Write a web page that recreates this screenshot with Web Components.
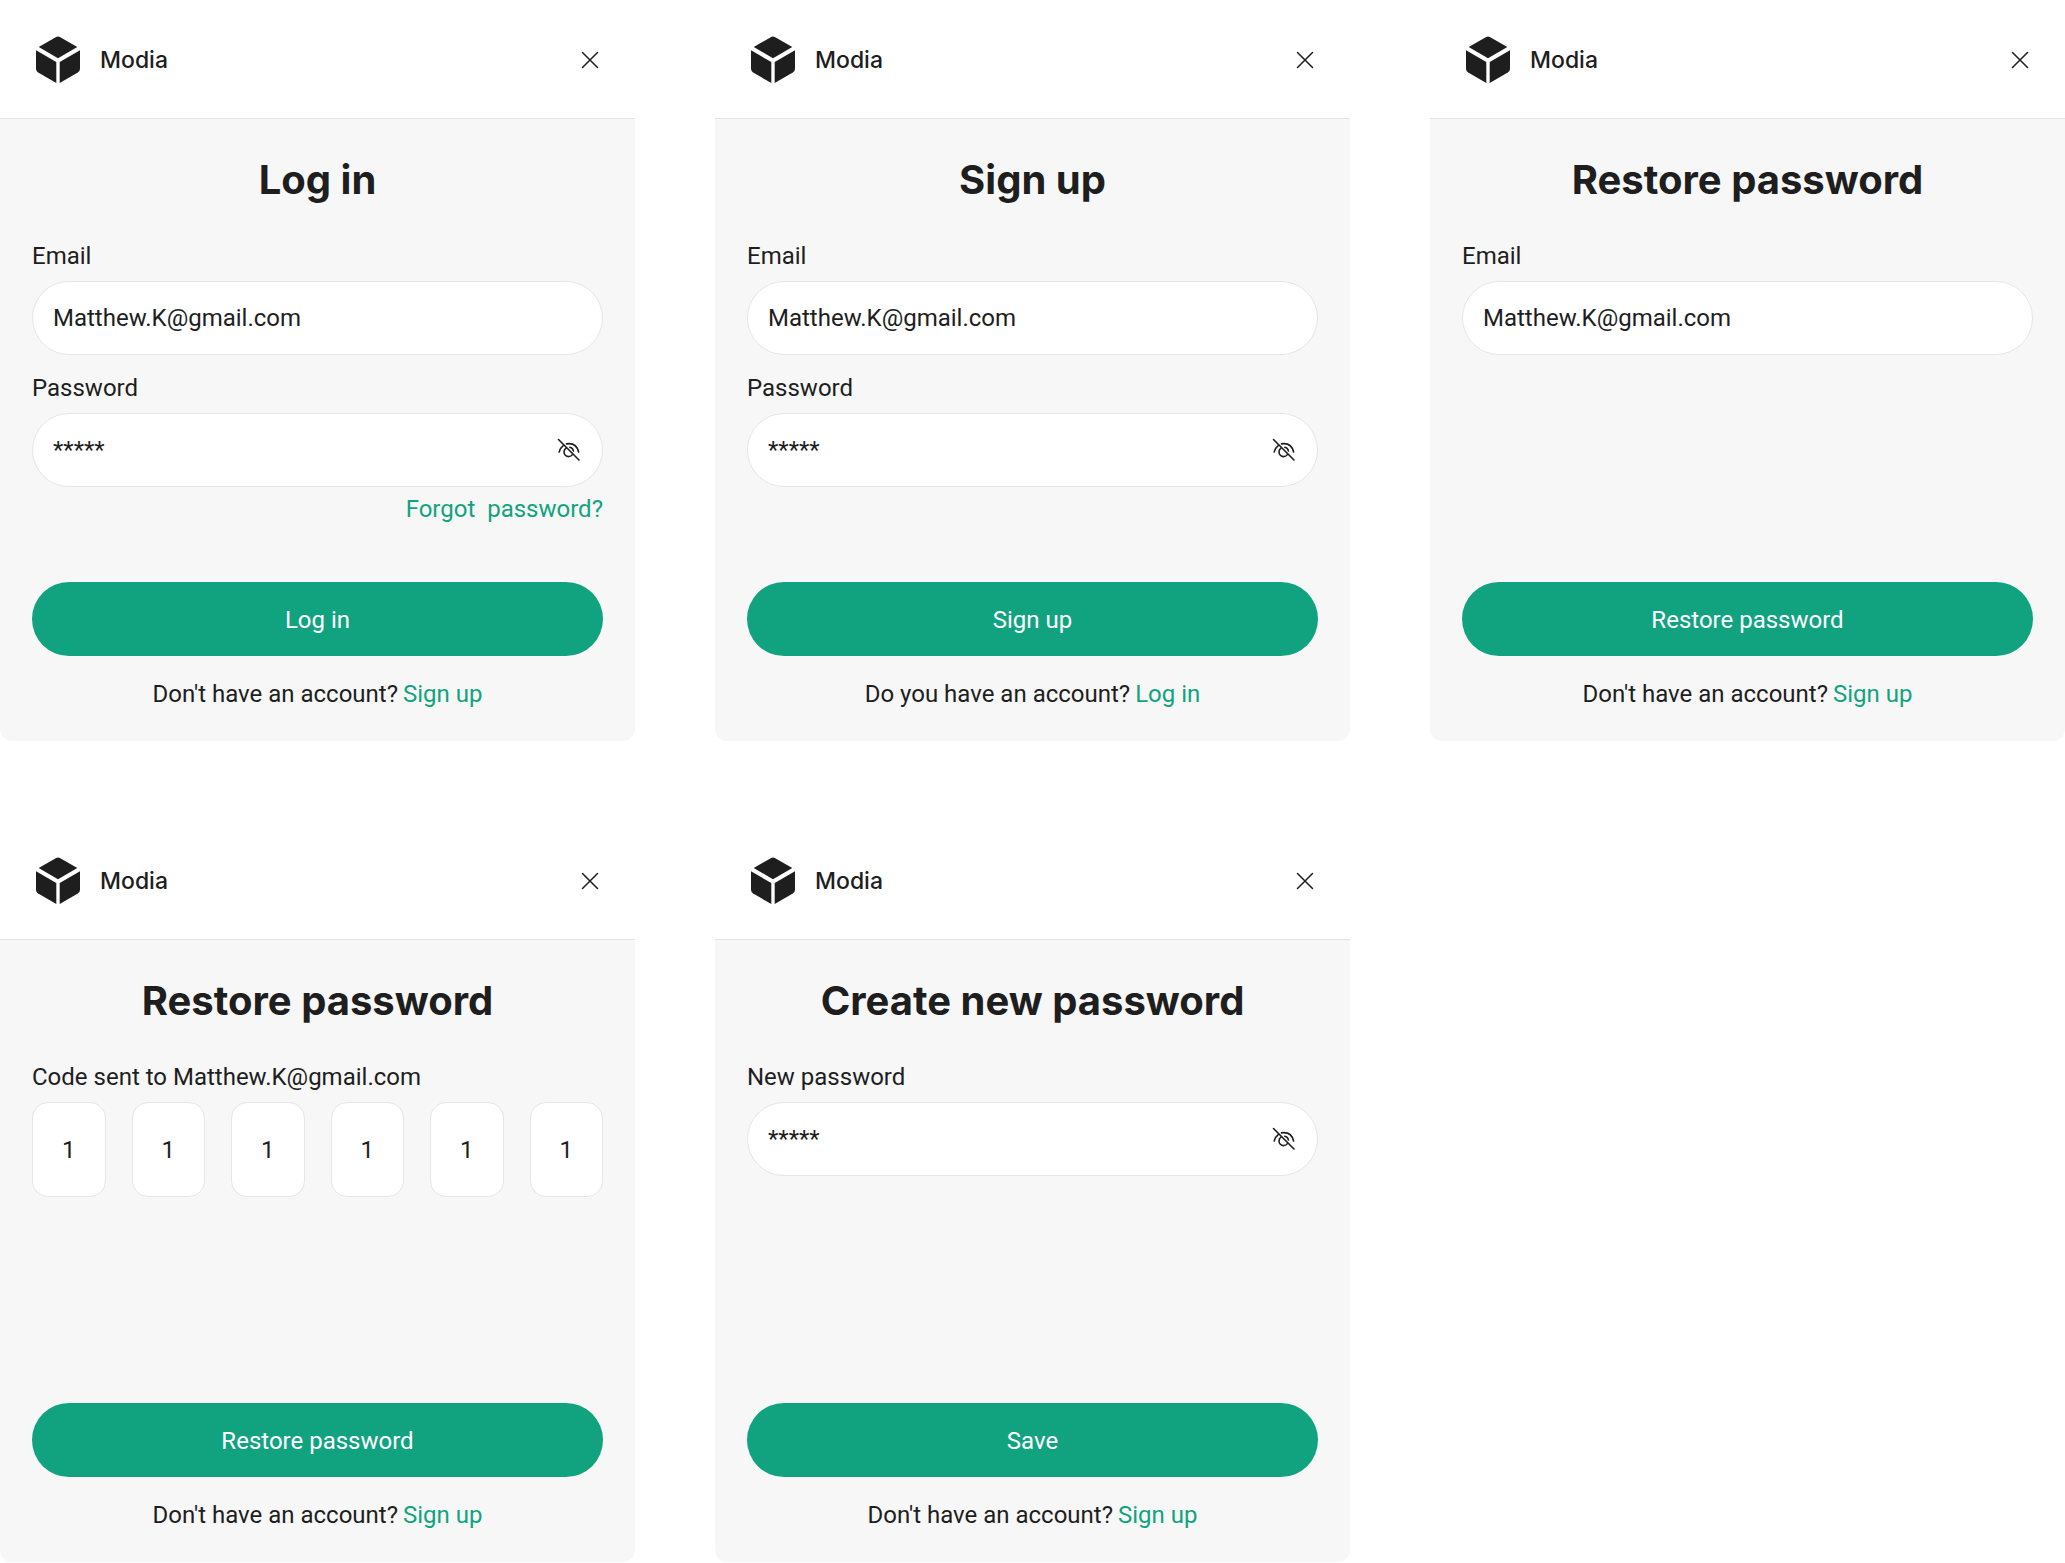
<!DOCTYPE html>
<html lang="en">
<head>
<meta charset="utf-8">
<title>Modia – account screens</title>
<style>
  body {
    margin: 0;
    background: #fff;
    color: #1e1e1e;
    font: 24px/32px Roboto, Arial, sans-serif;
  }
</style>
</head>
<body>
<auth-board>
  <auth-card heading="Log in" action="Log in" prompt="Don't have an account?" link="Sign up">
    <text-field label="Email" value="Matthew.K@gmail.com"></text-field>
    <text-field label="Password" value="*****" secret></text-field>
    <forgot-link></forgot-link>
  </auth-card>
  <auth-card heading="Sign up" action="Sign up" prompt="Do you have an account?" link="Log in">
    <text-field label="Email" value="Matthew.K@gmail.com"></text-field>
    <text-field label="Password" value="*****" secret></text-field>
  </auth-card>
  <auth-card heading="Restore password" action="Restore password" prompt="Don't have an account?" link="Sign up">
    <text-field label="Email" value="Matthew.K@gmail.com"></text-field>
  </auth-card>
  <auth-card heading="Restore password" action="Restore password" prompt="Don't have an account?" link="Sign up">
    <code-field label="Code sent to Matthew.K@gmail.com" value="111111"></code-field>
  </auth-card>
  <auth-card heading="Create new password" action="Save" prompt="Don't have an account?" link="Sign up">
    <text-field label="New password" value="*****" secret></text-field>
  </auth-card>
</auth-board>

<script>
  function render(host, markup) {
    const root = host.attachShadow({ mode: 'open' });
    root.innerHTML = '<style>*{box-sizing:border-box}</style>' + markup;
    return root;
  }

  customElements.define('auth-board', class extends HTMLElement {
    connectedCallback() {
      render(this, `
        <style>
          :host { display: block; }
          main { display: grid; grid-template-columns: repeat(3, minmax(0, 1fr)); gap: 80px; }
        </style>
        <main><slot></slot></main>`);
    }
  });

  customElements.define('modia-brand', class extends HTMLElement {
    connectedCallback() {
      render(this, `
        <style>
          :host { display: flex; align-items: center; gap: 16px; font: 500 23px/32px Inter, sans-serif; }
          svg { display: block; width: 52px; height: 52px; }
        </style>
        <svg viewBox="0 0 52 52" fill="#1e1e1e" aria-hidden="true">
          <path d="M24.2 2.9Q26 2 27.8 2.9L45.3 13L26 24.2L6.7 13Z"/>
          <path d="M4 16.3L24.3 28V49L6.2 38.6Q4 37.3 4 34.8Z"/>
          <path d="M48 16.3L27.7 28V49L45.8 38.6Q48 37.3 48 34.8Z"/>
        </svg>
        <span>Modia</span>`);
    }
  });

  customElements.define('auth-card', class extends HTMLElement {
    connectedCallback() {
      const a = n => this.getAttribute(n);
      render(this, `
        <style>
          :host { display: flex; flex-direction: column; }
          header {
            display: flex; align-items: center; justify-content: space-between;
            padding: 34px 32px 32px; border-bottom: 1px solid #e3e3e3;
          }
          .close { display: flex; padding: 4px; border: 0; background: none; color: #1e1e1e; }
          form {
            flex: 1; display: flex; flex-direction: column; min-height: 622px;
            padding: 37px 32px 31px; background: #f7f7f7; border-radius: 0 0 12px 12px;
          }
          h1 { margin: 0 0 36px; font: 700 40px/48px Inter, sans-serif; text-align: center; }
          .fields { flex: 1; display: flex; flex-direction: column; }
          .submit {
            height: 74px; padding: 2px 32px 0; border: 0; border-radius: 37px; background: #11a37f;
            color: #fff; font: inherit;
          }
          p { display: flex; justify-content: center; gap: 5px; margin: 22px 0 0; }
          a { color: #11a37f; text-decoration: none; }
        </style>
        <header>
          <modia-brand></modia-brand>
          <button class="close" type="button" aria-label="Close">
            <svg width="18" height="18" viewBox="0 0 18 18" fill="none" stroke="currentColor" stroke-width="1.5" stroke-linecap="round" aria-hidden="true"><path d="M1.5 1.5L16.5 16.5M16.5 1.5L1.5 16.5"/></svg>
          </button>
        </header>
        <form>
          <h1>${a('heading')}</h1>
          <div class="fields"><slot></slot></div>
          <button class="submit" type="button">${a('action')}</button>
          <p><span>${a('prompt')}</span><a href="#">${a('link')}</a></p>
        </form>`);
    }
  });

  customElements.define('text-field', class extends HTMLElement {
    connectedCallback() {
      const secret = this.hasAttribute('secret');
      render(this, `
        <style>
          :host { display: block; }
          :host(:not(:first-child)) { margin-top: 17px; }
          label { display: block; margin-bottom: 9px; }
          .box {
            display: flex; align-items: center; height: 74px; padding: 0 19px 0 20px;
            border: 1px solid #e6e6e6; border-radius: 37px; background: #fff;
          }
          input { flex: 1; min-width: 0; padding: 0; border: 0; outline: 0; background: none; color: inherit; font: inherit; }
          button { display: flex; padding: 0; border: 0; background: none; color: #1e1e1e; }
        </style>
        <label for="field">${this.getAttribute('label')}</label>
        <div class="box">
          <input id="field" type="text" value="${this.getAttribute('value')}" autocomplete="off" spellcheck="false">
          ${secret ? `<button type="button" aria-label="Show password">
            <svg width="28" height="28" viewBox="0 0 28 28" fill="none" stroke="currentColor" stroke-width="1.6" stroke-linecap="round" aria-hidden="true">
              <path d="M3.500 3.500L24 24"/>
              <path d="M4.200 16C5 13 6.500 10.800 8.500 9.400M11.500 7.900Q12.700 7.600 14 7.600C18.800 7.600 22.400 10.600 23.600 16"/>
              <path d="M11 12.200A4.600 4.600 0 1 0 17.400 18.600M14.800 11.200A4.600 4.600 0 0 1 18.400 15"/>
            </svg></button>` : ''}
        </div>`);
    }
  });

  customElements.define('forgot-link', class extends HTMLElement {
    connectedCallback() {
      render(this, `
        <style>
          :host { display: flex; justify-content: flex-end; margin-top: 6px; }
          a { color: #11a37f; text-decoration: none; white-space: pre; }
        </style>
        <a href="#">Forgot  password?</a>`);
    }
  });

  customElements.define('code-field', class extends HTMLElement {
    connectedCallback() {
      const boxes = [...this.getAttribute('value')].map((d, i) =>
        `<input id="digit${i}" type="text" inputmode="numeric" maxlength="1" value="${d}" aria-label="Digit ${i + 1}">`).join('');
      render(this, `
        <style>
          :host { display: block; }
          label { display: block; margin-bottom: 9px; }
          .row { display: grid; grid-template-columns: repeat(6, minmax(0, 1fr)); gap: 26px; }
          input {
            width: 100%; height: 95px; padding: 0; border: 1px solid #e6e6e6; border-radius: 16px;
            outline: 0; background: #fff; color: inherit; font: inherit; text-align: center;
          }
        </style>
        <label for="digit0">${this.getAttribute('label')}</label>
        <div class="row">${boxes}</div>`);
    }
  });
</script>
</body>
</html>
